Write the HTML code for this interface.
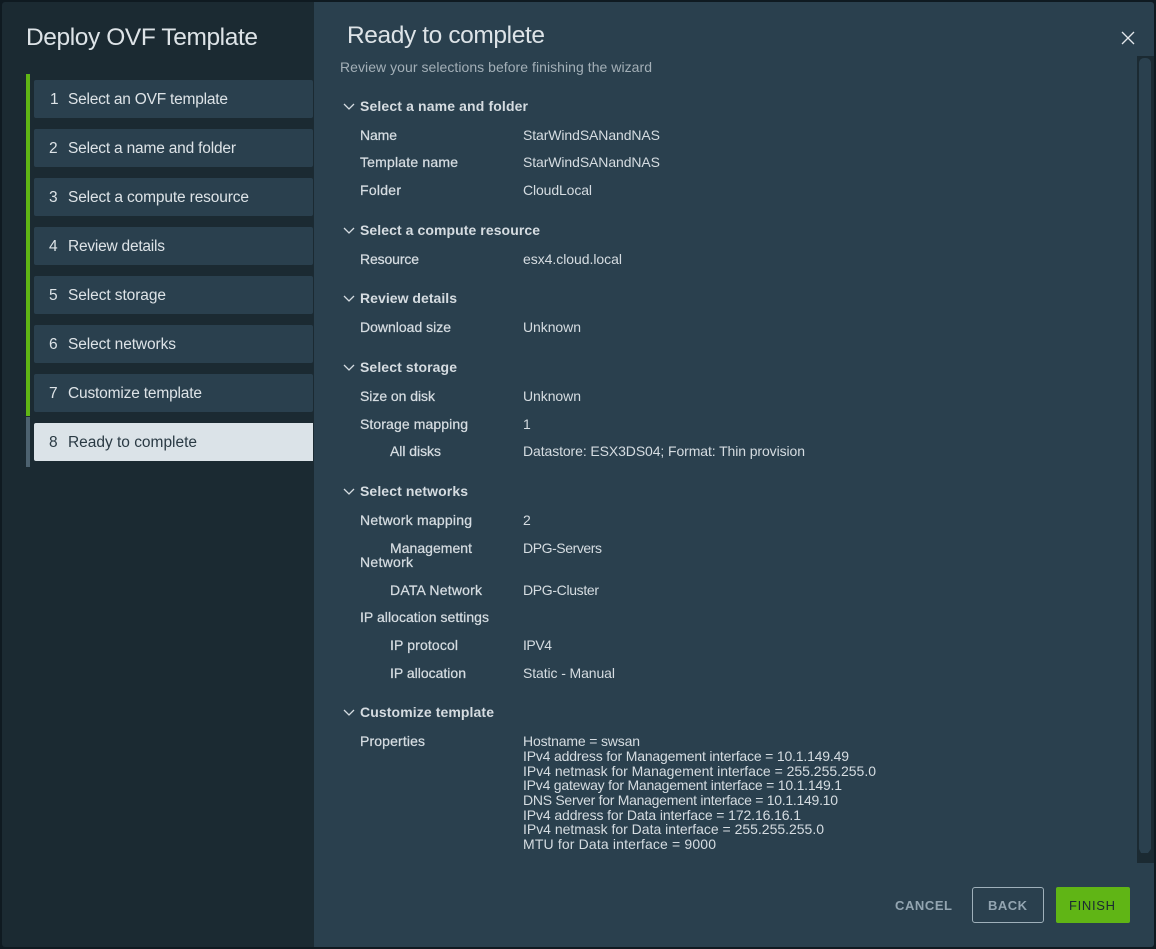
<!DOCTYPE html>
<html><head><meta charset="utf-8"><title>Deploy OVF Template</title>
<style>
html,body{margin:0;padding:0;background:#0f1a21;width:1156px;height:949px;overflow:hidden}
svg{display:block;font-family:"Liberation Sans",sans-serif}
.s{font-size:15.5px;fill:#dde3e7}
.h{font-size:14px;font-weight:bold;fill:#d5dce1}
.l{font-size:14px;fill:#d5dce1;stroke:#d5dce1;stroke-width:.25px}
.v{font-size:14px;fill:#d5dce1}
</style></head><body>
<svg width="1156" height="949" viewBox="0 0 1156 949" xmlns="http://www.w3.org/2000/svg">
<rect x="2" y="2" width="1152" height="945" rx="3" fill="#1b2a32"/>
<path d="M314 2H1151a3 3 0 0 1 3 3V944a3 3 0 0 1-3 3H314Z" fill="#2a404e"/>
<text x="26" y="45" font-size="24.5" fill="#dde3e7" textLength="232">Deploy OVF Template</text>
<rect x="26" y="74" width="4" height="342" fill="#60b515"/>
<rect x="26" y="417" width="4" height="50" fill="#4d6270"/>
<g fill="#2a404e">
<rect x="34" y="80" width="279" height="38" rx="2"/>
<rect x="34" y="129" width="279" height="38" rx="2"/>
<rect x="34" y="178" width="279" height="38" rx="2"/>
<rect x="34" y="227" width="279" height="38" rx="2"/>
<rect x="34" y="276" width="279" height="38" rx="2"/>
<rect x="34" y="325" width="279" height="38" rx="2"/>
<rect x="34" y="374" width="279" height="38" rx="2"/>
</g>
<path d="M36 423H313V461H36a2 2 0 0 1-2-2V425a2 2 0 0 1 2-2Z" fill="#dbe3e8"/>
<g class="s">
<text x="50" y="104">1</text><text x="68" y="104" textLength="160">Select an OVF template</text>
<text x="49" y="153">2</text><text x="68" y="153" textLength="168">Select a name and folder</text>
<text x="49" y="202">3</text><text x="68" y="202" textLength="181">Select a compute resource</text>
<text x="49" y="251">4</text><text x="68" y="251" textLength="97">Review details</text>
<text x="49" y="300">5</text><text x="68" y="300" textLength="98">Select storage</text>
<text x="49" y="349">6</text><text x="68" y="349" textLength="108">Select networks</text>
<text x="49" y="398">7</text><text x="68" y="398" textLength="134">Customize template</text>
</g>
<g class="s" style="fill:#2a3a44">
<text x="49" y="447" style="fill:#2a3a44">8</text><text x="68" y="447" style="fill:#2a3a44" textLength="129">Ready to complete</text>
</g>
<text x="347" y="43" font-size="24.5" fill="#dde3e7" textLength="198">Ready to complete</text>
<text x="340" y="72" font-size="14" fill="#a3afb7" textLength="312">Review your selections before finishing the wizard</text>
<path d="M1122 32L1134 44M1134 32L1122 44" stroke="#e3e8eb" stroke-width="1.3" fill="none"/>
<rect x="1137" y="56" width="17" height="807" fill="#1b2a32"/>
<path d="M1139 63a5 5 0 0 1 5-5h2a5 5 0 0 1 5 5V849l-3 4h-7l-2-4Z" fill="#2a404e"/>
<g fill="none" stroke="#d5dce1" stroke-width="1.3">
<path d="M344 104l5 5 5-5"/><path d="M344 228l5 5 5-5"/><path d="M344 296l5 5 5-5"/><path d="M344 365l5 5 5-5"/><path d="M344 489l5 5 5-5"/><path d="M344 710l5 5 5-5"/>
</g>
<g class="h">
<text x="360" y="111" textLength="168">Select a name and folder</text>
<text x="360" y="235" textLength="180">Select a compute resource</text>
<text x="360" y="303" textLength="97">Review details</text>
<text x="360" y="372" textLength="97">Select storage</text>
<text x="360" y="496" textLength="108">Select networks</text>
<text x="360" y="717" textLength="134">Customize template</text>
</g>
<g class="l">
<text x="360" y="140" textLength="37">Name</text>
<text x="360" y="167" textLength="98">Template name</text>
<text x="360" y="195" textLength="41">Folder</text>
<text x="360" y="264" textLength="59">Resource</text>
<text x="360" y="332" textLength="91">Download size</text>
<text x="360" y="401" textLength="75">Size on disk</text>
<text x="360" y="429" textLength="108">Storage mapping</text>
<text x="390" y="456" textLength="51">All disks</text>
<text x="360" y="525" textLength="112">Network mapping</text>
<text x="390" y="553" textLength="82">Management</text>
<text x="360" y="567" textLength="53">Network</text>
<text x="390" y="595" textLength="92">DATA Network</text>
<text x="360" y="622" textLength="129">IP allocation settings</text>
<text x="390" y="650" textLength="68">IP protocol</text>
<text x="390" y="678" textLength="76">IP allocation</text>
<text x="360" y="746" textLength="65">Properties</text>
</g>
<g class="v">
<text x="523" y="140" textLength="137">StarWindSANandNAS</text>
<text x="523" y="167" textLength="137">StarWindSANandNAS</text>
<text x="523" y="195" textLength="69">CloudLocal</text>
<text x="523" y="264" textLength="99">esx4.cloud.local</text>
<text x="523" y="332" textLength="58">Unknown</text>
<text x="523" y="401" textLength="58">Unknown</text>
<text x="523" y="429">1</text>
<text x="523" y="456" textLength="282">Datastore: ESX3DS04; Format: Thin provision</text>
<text x="523" y="525">2</text>
<text x="523" y="553" textLength="79">DPG-Servers</text>
<text x="523" y="595" textLength="76">DPG-Cluster</text>
<text x="523" y="650" textLength="29">IPV4</text>
<text x="523" y="678" textLength="92">Static - Manual</text>
<text x="523" y="746" textLength="117">Hostname = swsan</text>
<text x="523" y="761" textLength="326">IPv4 address for Management interface = 10.1.149.49</text>
<text x="523" y="776" textLength="353">IPv4 netmask for Management interface = 255.255.255.0</text>
<text x="523" y="790" textLength="319">IPv4 gateway for Management interface = 10.1.149.1</text>
<text x="523" y="805" textLength="315">DNS Server for Management interface = 10.1.149.10</text>
<text x="523" y="820" textLength="278">IPv4 address for Data interface = 172.16.16.1</text>
<text x="523" y="834" textLength="301">IPv4 netmask for Data interface = 255.255.255.0</text>
<text x="523" y="849" textLength="193">MTU for Data interface = 9000</text>
</g>
<text x="895" y="910" font-size="13" font-weight="bold" fill="#93a5b1" textLength="57">CANCEL</text>
<rect x="972.5" y="887.5" width="71" height="35" rx="2.5" fill="none" stroke="#9fb0ba"/>
<text x="988" y="910" font-size="13" font-weight="bold" fill="#93a5b1" textLength="39">BACK</text>
<rect x="1056" y="887" width="74" height="36" rx="2" fill="#60b515"/>
<text x="1069" y="910" font-size="13" fill="#1b2a32" textLength="46">FINISH</text>
</svg>
</body></html>
